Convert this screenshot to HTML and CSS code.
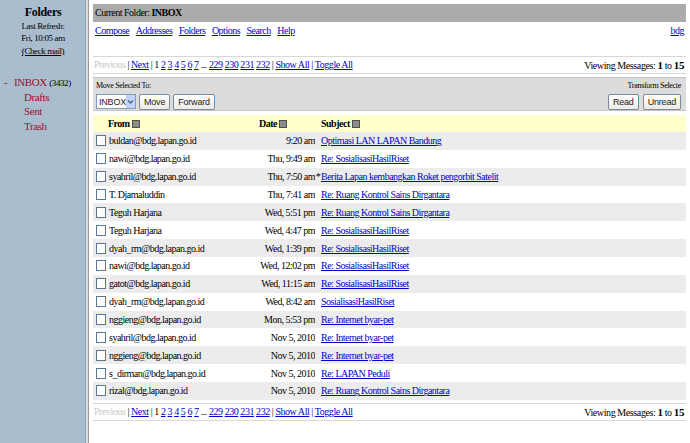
FILE: index.html
```html
<!DOCTYPE html>
<html>
<head>
<meta charset="utf-8">
<link rel="stylesheet" href="styles.css">
</head>
<body>
<div class="page">
  <aside class="sidebar">
    <div class="side-title">Folders</div>
    <div class="side-small">Last Refresh:</div>
    <div class="side-small">Fri, 10:05 am</div>
    <div class="side-small"><a class="check">(Check mail)</a></div>
    <div class="folders">
      <div class="folder inbox"><span class="dash">-</span><span class="fl">INBOX</span> <span class="count">(3432)</span></div>
      <div class="folder sub"><span class="fl">Drafts</span></div>
      <div class="folder sub"><span class="fl">Sent</span></div>
      <div class="folder sub"><span class="fl">Trash</span></div>
    </div>
  </aside>
  <main class="main">
    <div class="curbar">Current Folder: <b>INBOX</b></div>
    <div class="navrow">
      <div class="navlinks"><a>Compose</a><a>Addresses</a><a>Folders</a><a>Options</a><a>Search</a><a>Help</a></div>
      <a class="brand">bdg</a>
    </div>
    <div class="pager top">
      <div class="pages"><span class="dis">Previous</span> | <a>Next</a> | 1 <a>2</a> <a>3</a> <a>4</a> <a>5</a> <a>6</a> <a>7</a> ... <a>229</a> <a>230</a> <a>231</a> <a>232</a> | <a>Show All</a> | <a>Toggle All</a></div>
      <div class="viewing">Viewing Messages: <b>1</b> to <b>15</b></div>
    </div>
    <div class="movebar">
      <div class="mv-left">
        <div class="tiny">Move Selected To:</div>
        <div class="ctrls">
          <span class="select">INBOX<span class="arrow"><svg width="9" height="9" viewBox="0 0 9 9"><path d="M2 3.5 L4.5 6 L7 3.5" fill="none" stroke="#4d6185" stroke-width="1.4"/></svg></span></span>
          <span class="btn">Move</span>
          <span class="btn">Forward</span>
        </div>
      </div>
      <div class="mv-right">
        <div class="tiny">Transform Selecte</div>
        <div class="ctrls">
          <span class="btn">Read</span>
          <span class="btn">Unread</span>
        </div>
      </div>
    </div>
    <table class="msgs">
      <colgroup><col class="w-from"><col class="w-date"><col></colgroup>
      <thead>
        <tr><th class="c-from">From <span class="sort"></span></th><th class="c-date">Date <span class="sort"></span></th><th class="c-subj">Subject <span class="sort"></span></th></tr>
      </thead>
      <tbody>
        <tr class="g"><td class="c-from"><span class="cb"></span>buldan@bdg.lapan.go.id</td><td class="c-date">9:20 am</td><td class="c-subj"><span class="star"></span><a>Optimasi LAN LAPAN Bandung</a></td></tr>
        <tr><td class="c-from"><span class="cb"></span>nawi@bdg.lapan.go.id</td><td class="c-date">Thu, 9:49 am</td><td class="c-subj"><span class="star"></span><a>Re: SosialisasiHasilRiset</a></td></tr>
        <tr class="g"><td class="c-from"><span class="cb"></span>syahril@bdg.lapan.go.id</td><td class="c-date">Thu, 7:50 am</td><td class="c-subj"><span class="star">*</span><a>Berita Lapan kembangkan Roket pengorbit Satelit</a></td></tr>
        <tr><td class="c-from"><span class="cb"></span>T. Djamaluddin</td><td class="c-date">Thu, 7:41 am</td><td class="c-subj"><span class="star"></span><a>Re: Ruang Kontrol Sains Dirgantara</a></td></tr>
        <tr class="g"><td class="c-from"><span class="cb"></span>Teguh Harjana</td><td class="c-date">Wed, 5:51 pm</td><td class="c-subj"><span class="star"></span><a>Re: Ruang Kontrol Sains Dirgantara</a></td></tr>
        <tr><td class="c-from"><span class="cb"></span>Teguh Harjana</td><td class="c-date">Wed, 4:47 pm</td><td class="c-subj"><span class="star"></span><a>Re: SosialisasiHasilRiset</a></td></tr>
        <tr class="g"><td class="c-from"><span class="cb"></span>dyah_rm@bdg.lapan.go.id</td><td class="c-date">Wed, 1:39 pm</td><td class="c-subj"><span class="star"></span><a>Re: SosialisasiHasilRiset</a></td></tr>
        <tr><td class="c-from"><span class="cb"></span>nawi@bdg.lapan.go.id</td><td class="c-date">Wed, 12:02 pm</td><td class="c-subj"><span class="star"></span><a>Re: SosialisasiHasilRiset</a></td></tr>
        <tr class="g"><td class="c-from"><span class="cb"></span>gatot@bdg.lapan.go.id</td><td class="c-date">Wed, 11:15 am</td><td class="c-subj"><span class="star"></span><a>Re: SosialisasiHasilRiset</a></td></tr>
        <tr><td class="c-from"><span class="cb"></span>dyah_rm@bdg.lapan.go.id</td><td class="c-date">Wed, 8:42 am</td><td class="c-subj"><span class="star"></span><a>SosialisasiHasilRiset</a></td></tr>
        <tr class="g"><td class="c-from"><span class="cb"></span>nggieng@bdg.lapan.go.id</td><td class="c-date">Mon, 5:53 pm</td><td class="c-subj"><span class="star"></span><a>Re: Internet byar-pet</a></td></tr>
        <tr><td class="c-from"><span class="cb"></span>syahril@bdg.lapan.go.id</td><td class="c-date">Nov 5, 2010</td><td class="c-subj"><span class="star"></span><a>Re: Internet byar-pet</a></td></tr>
        <tr class="g"><td class="c-from"><span class="cb"></span>nggieng@bdg.lapan.go.id</td><td class="c-date">Nov 5, 2010</td><td class="c-subj"><span class="star"></span><a>Re: Internet byar-pet</a></td></tr>
        <tr><td class="c-from"><span class="cb"></span>s_dirman@bdg.lapan.go.id</td><td class="c-date">Nov 5, 2010</td><td class="c-subj"><span class="star"></span><a>Re: LAPAN Peduli</a></td></tr>
        <tr class="g"><td class="c-from"><span class="cb"></span>rizal@bdg.lapan.go.id</td><td class="c-date">Nov 5, 2010</td><td class="c-subj"><span class="star"></span><a>Re: Ruang Kontrol Sains Dirgantara</a></td></tr>
      </tbody>
    </table>
    <div class="pager bottom">
      <div class="pages"><span class="dis">Previous</span> | <a>Next</a> | 1 <a>2</a> <a>3</a> <a>4</a> <a>5</a> <a>6</a> <a>7</a> ... <a>229</a> <a>230</a> <a>231</a> <a>232</a> | <a>Show All</a> | <a>Toggle All</a></div>
      <div class="viewing">Viewing Messages: <b>1</b> to <b>15</b></div>
    </div>
  </main>
</div>
</body>
</html>
```

FILE: styles.css
```css
html, body {
  margin: 0;
  padding: 0;
  height: 100%;
  background: #ffffff;
}
body {
  font-family: "Liberation Serif", "Times New Roman", serif;
  font-size: 10px;
  color: #000;
  letter-spacing: -0.5px;
}
.page {
  display: flex;
  height: 443px;
  overflow: hidden;
}
.sidebar {
  width: 88px;
  flex: none;
  background: #a9bdcf;
  border-right: 2px solid #dcdcdc;
  box-shadow: inset -1px 0 0 #8e9fae;
  text-align: center;
  padding-top: 5px;
  box-sizing: border-box;
}
.side-title {
  font-weight: bold;
  font-size: 12px;
  line-height: 14px;
  margin-bottom: 1px;
  letter-spacing: -0.3px;
}
.side-small {
  font-size: 9px;
  line-height: 12px;
  letter-spacing: -0.4px;
}
.side-small:nth-child(4) { margin-top: 1px; }
.check { color: #000; text-decoration: underline; }
.folders {
  text-align: left;
  margin-top: 18px;
  padding-left: 4px;
}
.folder {
  font-size: 11px;
  height: 14.5px;
  line-height: 14.5px;
  letter-spacing: -0.4px;
}
.fl { color: #a0102c; }
.count { font-size: 9px; color: #000; }
.dash { color: #a0102c; display: inline-block; width: 10px; }
.sub { padding-left: 20px; }

.main {
  flex: 1;
  border-left: 1px solid #9a9a9a;
  padding: 4px 4px 0 4px;
  min-width: 0;
}
a { color: #0000cc; text-decoration: underline; }
.curbar {
  background: #ababab;
  height: 18px;
  line-height: 18px;
  padding-left: 2px;
}
.navrow {
  display: flex;
  justify-content: space-between;
  padding: 3px 2px 0 2px;
  height: 32px;
  box-sizing: border-box;
}
.navlinks a { margin-right: 6.5px; }
.pager {
  display: flex;
  justify-content: space-between;
  border-top: 1px solid #d8d8d8;
  border-bottom: 1px solid #d8d8d8;
  height: 16px;
  line-height: 16px;
  padding: 0 2px 0 1px;
  margin-top: 2px;
}
.pages { letter-spacing: -0.45px; }
.pager.bottom { margin-top: 3px; }
.dis { color: #c8c8c8; }
.viewing { font-size: 10px; letter-spacing: -0.4px; }
.viewing b { font-size: 11px; }
.movebar {
  display: flex;
  justify-content: space-between;
  background: #dcdcdc;
  border-top: 1px solid #c4c4c4;
  border-bottom: 1px solid #c4c4c4;
  margin-top: 3px;
  padding: 3px 5px 2px 3px;
  height: 34px;
  box-sizing: border-box;
}
.mv-right { text-align: right; }
.tiny { font-size: 8px; line-height: 10px; letter-spacing: -0.3px; }
.ctrls {
  display: flex;
  gap: 3px;
  margin-top: 3px;
}
.mv-right .ctrls { justify-content: flex-end; gap: 4px; }
.select, .btn {
  font-family: "Liberation Sans", Arial, sans-serif;
  font-size: 9px;
  letter-spacing: -0.2px;
  color: #222;
  box-sizing: border-box;
  display: inline-flex;
  align-items: center;
}
.select {
  background: #fff;
  border: 1px solid #7f9db9;
  padding-left: 2px;
  width: 40px;
  height: 15px;
  justify-content: space-between;
}
.arrow {
  width: 11px;
  height: 13px;
  background: #c1d3fb;
  display: inline-flex;
  align-items: center;
  justify-content: center;
}
.btn {
  background: linear-gradient(#fefefe, #ecebe6);
  border: 1px solid #7a8a99;
  border-radius: 2px;
  padding: 0 4px;
  height: 16px;
}
.msgs {
  width: 100%;
  border-collapse: collapse;
  table-layout: fixed;
  margin-top: 4px;
}
.w-from { width: 164px; }
.w-date { width: 58px; }
.msgs th {
  background: #ffffcc;
  height: 17px;
  font-weight: bold;
  text-align: left;
  padding: 0;
  white-space: nowrap;
}
.msgs td {
  height: 17.87px;
  padding: 0;
  white-space: nowrap;
  overflow: hidden;
}
.msgs tr.g td { background: #ececec; }
td.c-from { padding-left: 3px; }
th.c-from { padding-left: 15px; }
td.c-date { text-align: right; }
th.c-date { padding-left: 2px; }
th.c-subj { padding-left: 6px; }
.sort {
  display: inline-block;
  width: 6px;
  height: 6px;
  background: #8c8c8c;
  border: 1px solid #505050;
  vertical-align: -1px;
}
.cb {
  display: inline-block;
  width: 8px;
  height: 9px;
  border: 1px solid #5a7896;
  background: #fff;
  margin-right: 3px;
  vertical-align: -2px;
}
.star {
  display: inline-block;
  width: 6px;
  text-align: center;
}
```
